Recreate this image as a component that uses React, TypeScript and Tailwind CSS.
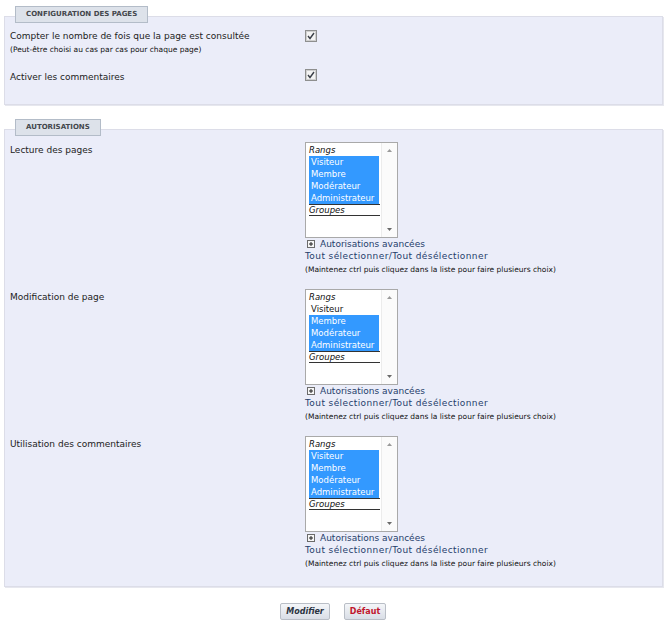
import React from "react";

const font = { fontFamily: '"DejaVu Sans", Verdana, sans-serif' };

function Checkbox() {
  return (
    <svg width="12" height="12" viewBox="0 0 12 12" className="block">
      <rect x="0.5" y="0.5" width="11" height="11" fill="#ececec" stroke="#8e8f8f" />
      <rect x="1.5" y="1.5" width="9" height="9" fill="#f4f4f4" stroke="#d0d0d0" />
      <path d="M3 6 L5 8.5 L9 3" fill="none" stroke="#3a3f48" strokeWidth="1.4" />
    </svg>
  );
}

function PlusBox() {
  return (
    <svg width="8" height="8" viewBox="0 0 8 8" className="inline-block mr-[5px] align-[-1px]">
      <rect x="0.5" y="0.5" width="7" height="7" fill="#f6f6f6" stroke="#6b6b6b" />
      <path d="M2 4 H6 M4 2 V6" stroke="#222" strokeWidth="1" />
    </svg>
  );
}

function Tab({ children }: { children: React.ReactNode }) {
  return (
    <div className="relative z-10 ml-[11px] -mb-[7px] block h-[17px] w-fit border border-[#b3bcc8] bg-[#dde2ea] px-[10px] text-[7px] font-bold leading-[15px] text-[#44474c]">
      {children}
    </div>
  );
}

const ranks = ["Visiteur", "Membre", "Modérateur", "Administrateur"];

function ListBox({ selected }: { selected: string[] }) {
  return (
    <div className="flex h-[96px] w-[93px] border border-[#a9a9a9] bg-white">
      <div className="flex-1 pl-[3px] pt-[1px] text-[8.5px] leading-[12px] text-[#111]">
        <div className="italic">Rangs</div>
        {ranks.map((r) => (
          <div
            key={r}
            className={
              selected.includes(r)
                ? "w-[70px] overflow-hidden whitespace-nowrap bg-[#3399ff] pl-[2px] text-white"
                : "w-[70px] overflow-hidden whitespace-nowrap pl-[2px]"
            }
          >
            {r}
          </div>
        ))}
        <div className="w-[71px] border-t border-[#333]" />
        <div className="h-[11px] w-[71px] border-b border-[#333] italic leading-[11px]">Groupes</div>
      </div>
      <div className="flex w-[16px] flex-col items-center justify-between border-l border-[#ececec] bg-[#fbfbfb] py-[6px]">
        <svg width="5" height="3" viewBox="0 0 5 3">
          <path d="M0 3 L2.5 0 L5 3 Z" fill="#9a9a9a" />
        </svg>
        <svg width="5" height="3" viewBox="0 0 5 3">
          <path d="M0 0 L2.5 3 L5 0 Z" fill="#6a6a6a" />
        </svg>
      </div>
    </div>
  );
}

function PermRow({ label, selected }: { label: string; selected: string[] }) {
  return (
    <div className="flex h-[134px]">
      <div className="w-[300px] pl-[5px] pt-[2px] text-[9px] leading-[12px] text-[#222]">{label}</div>
      <div>
        <ListBox selected={selected} />
        <div className="text-[9px] leading-[12px] text-[#1f3d6b]">
          <span className="pl-[2px]">
            <PlusBox />
          </span>
          Autorisations avancées
        </div>
        <div className="text-[9px] leading-[13px] tracking-[0.4px] text-[#1f3d6b]">
          Tout sélectionner/Tout désélectionner
        </div>
        <div className="whitespace-nowrap text-[7.5px] leading-[13px] text-[#111]">
          (Maintenez ctrl puis cliquez dans la liste pour faire plusieurs choix)
        </div>
      </div>
    </div>
  );
}

export default function App() {
  return (
    <div className="min-h-[622px] w-[668px] bg-white pt-[6px] leading-none" style={font}>
      <div className="ml-[4px] mr-[5px]">
        <Tab>CONFIGURATION DES PAGES</Tab>
        <div className="h-[89px] border border-[#dcdde8] bg-[#ebedf9] pt-[13px] shadow-[1px_1px_0_#e6e7ee]">
          <div className="flex">
            <div className="w-[300px] pl-[5px] text-[#222]">
              <div className="text-[9px] leading-[13px]">Compter le nombre de fois que la page est consultée</div>
              <div className="mt-[1px] text-[7.5px] leading-[11px] text-[#111]">
                (Peut-être choisi au cas par cas pour chaque page)
              </div>
            </div>
            <Checkbox />
          </div>
          <div className="mt-[14px] flex">
            <div className="w-[300px] pl-[5px] pt-[2px] text-[9px] leading-[13px] text-[#222]">
              Activer les commentaires
            </div>
            <Checkbox />
          </div>
        </div>

        <div className="mt-[14px]">
          <Tab>AUTORISATIONS</Tab>
        </div>
        <div className="flex h-[458px] flex-col gap-[13px] border border-[#dcdde8] bg-[#ebedf9] pt-[12px] shadow-[1px_1px_0_#e6e7ee]">
          <PermRow label="Lecture des pages" selected={ranks} />
          <PermRow label="Modification de page" selected={["Membre", "Modérateur", "Administrateur"]} />
          <PermRow label="Utilisation des commentaires" selected={ranks} />
        </div>
      </div>

      <div className="mt-[16px] flex justify-center gap-[14px] pr-[2px]">
        <button className="h-[17px] w-[50px] rounded-[2px] border border-[#b9bec6] bg-gradient-to-b from-[#f4f6f9] to-[#d9dee6] text-[8px] font-bold italic leading-[15px] text-[#2b3442]">
          Modifier
        </button>
        <button className="h-[17px] w-[42px] rounded-[2px] border border-[#b9bec6] bg-gradient-to-b from-[#f4f6f9] to-[#d9dee6] text-[8px] font-bold leading-[15px] text-[#c0162c]">
          Défaut
        </button>
      </div>
    </div>
  );
}
